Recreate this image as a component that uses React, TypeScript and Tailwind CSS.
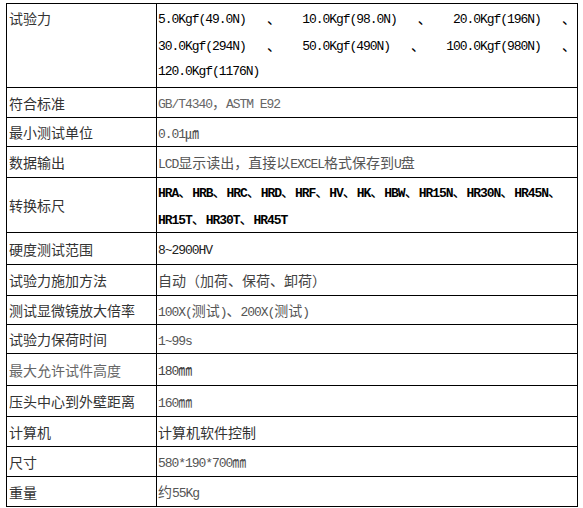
import React from "react";

// Latin runs in a mono face, CJK runs in Noto CJK
const cjk = /([\u3000-\u303f\u3300-\u33ff\u4e00-\u9fff\uff00-\uffef]+)/;

const Mixed = ({ text, bold = false }: { text: string; bold?: boolean }) => (
  <>
    {text.split(cjk).filter(Boolean).map((part, i) =>
      cjk.test(part) ? (
        <span key={i} className="font-['Noto_Sans_CJK_SC',sans-serif] text-[14px]">{part}</span>
      ) : (
        <span
          key={i}
          className={
            bold
              ? "font-['Liberation_Mono',monospace] text-[13px] tracking-[-1.05px] font-bold whitespace-pre"
              : "font-['Liberation_Mono',monospace] text-[13px] tracking-[-1.05px] whitespace-pre"
          }
        >
          {part}
        </span>
      )
    )}
  </>
);

const Line = ({ items }: { items: string[] }) => (
  <div className="flex h-[27px] items-center justify-between pr-[1px] text-black">
    {items.map((t, i) => (
      <span key={i}>
        <Mixed text={t} />
      </span>
    ))}
  </div>
);

type Row = { label: string; value: string; h: string; color: string; labelColor?: string };

const rows: Row[] = [
  { label: "最小测试单位", value: "0.01㎛", h: "h-[29px]", color: "text-[#555]" },
  { label: "数据输出", value: "LCD显示读出，直接以EXCEL格式保存到U盘", h: "h-[31px]", color: "text-[#555]" },
];

const rest: Row[] = [
  { label: "试验力施加方法", value: "自动（加荷、保荷、卸荷）", h: "h-[31px]", color: "text-[#444]" },
  { label: "测试显微镜放大倍率", value: "100X(测试)、200X(测试)", h: "h-[29px]", color: "text-[#555]" },
  { label: "试验力保荷时间", value: "1~99s", h: "h-[29px]", color: "text-[#555]" },
  { label: "最大允许试件高度", value: "180㎜", h: "h-[32px]", color: "text-[#444]", labelColor: "text-[#666]" },
  { label: "压头中心到外壁距离", value: "160㎜", h: "h-[31px]", color: "text-[#555]" },
  { label: "计算机", value: "计算机软件控制", h: "h-[30px]", color: "text-[#333]" },
  { label: "尺寸", value: "580*190*700㎜", h: "h-[30px]", color: "text-[#555]" },
  { label: "重量", value: "约55Kg", h: "h-[29px]", color: "text-[#555]" },
];

const SimpleRow = ({ r }: { r: Row }) => (
  <div className={`flex ${r.h}`}>
    <div className={`flex w-[150px] shrink-0 items-center border-r border-black pl-[2px] font-['Noto_Sans_CJK_SC',sans-serif] text-[14px] ${r.labelColor ?? "text-[#333]"}`}>
      {r.label}
    </div>
    <div className={`flex flex-1 items-center pl-[1px] ${r.color}`}>
      <span>
        <Mixed text={r.value} />
      </span>
    </div>
  </div>
);

export default function App() {
  return (
    <div className="min-h-[508px] bg-white pl-[6px] pt-[3px]">
      <div className="w-[572px] border border-black divide-y divide-black leading-none">
        {/* 试验力 */}
        <div className="flex h-[84px]">
          <div className="w-[150px] shrink-0 border-r border-black pl-[2px]">
            <div className="flex h-[27px] items-center font-['Noto_Sans_CJK_SC',sans-serif] text-[14px] text-[#333]">试验力</div>
          </div>
          <div className="flex-1 pl-[1px]">
            <Line items={["5.0Kgf(49.0N)", "、", "10.0Kgf(98.0N)", "、", "20.0Kgf(196N)", "、"]} />
            <Line items={["30.0Kgf(294N)", "、", "50.0Kgf(490N)", "、", "100.0Kgf(980N)", "、"]} />
            <div className="flex h-[27px] items-center text-black">
              <Mixed text="120.0Kgf(1176N)" />
            </div>
          </div>
        </div>

        <SimpleRow r={{ label: "符合标准", value: "GB/T4340，ASTM E92", h: "h-[30px]", color: "text-[#666]" }} />
        {rows.map((r) => (
          <SimpleRow key={r.label} r={r} />
        ))}

        {/* 转换标尺 */}
        <div className="flex h-[55px]">
          <div className="flex w-[150px] shrink-0 items-center border-r border-black pl-[2px] font-['Noto_Sans_CJK_SC',sans-serif] text-[14px] text-[#333]">
            转换标尺
          </div>
          <div className="flex-1 pl-[1px] text-black">
            <div className="flex h-[27px] items-center">
              <span>
                <Mixed text="HRA、HRB、HRC、HRD、HRF、HV、HK、HBW、HR15N、HR30N、HR45N、" bold />
              </span>
            </div>
            <div className="flex h-[27px] items-center">
              <span>
                <Mixed text="HR15T、HR30T、HR45T" bold />
              </span>
            </div>
          </div>
        </div>

        <SimpleRow r={{ label: "硬度测试范围", value: "8~2900HV", h: "h-[32px]", color: "text-[#222]" }} />
        {rest.map((r) => (
          <SimpleRow key={r.label} r={r} />
        ))}
      </div>
    </div>
  );
}
